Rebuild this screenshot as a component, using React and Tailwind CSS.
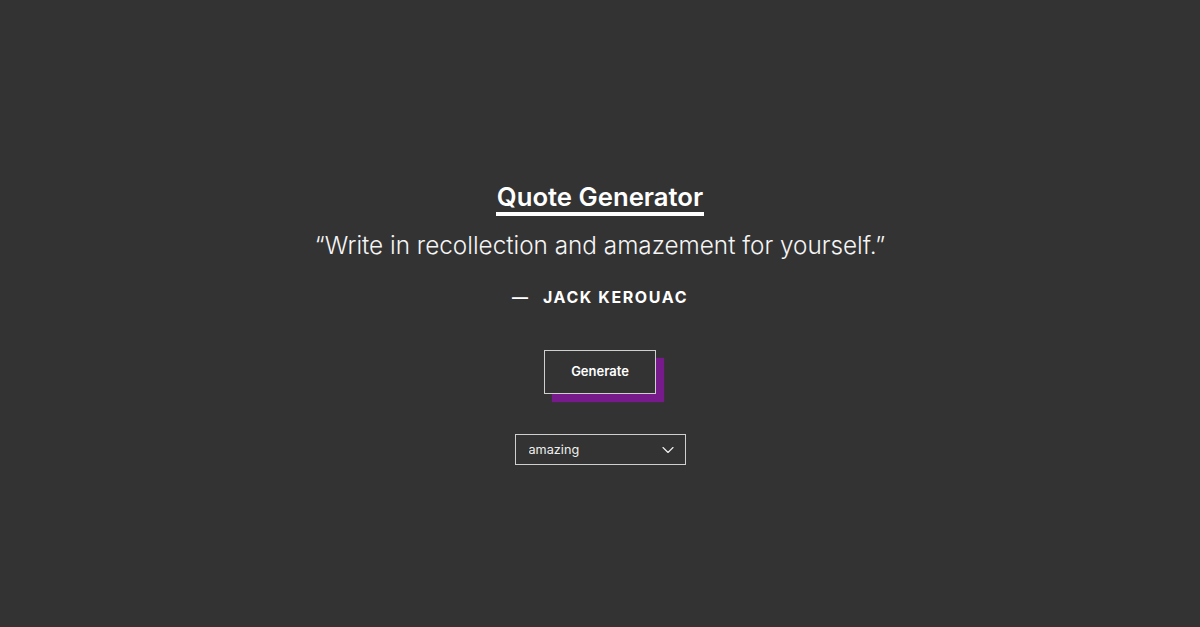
import { useState } from 'react';
import { ChevronDown } from 'lucide-react';

const topics = ['amazing', 'inspirational', 'life', 'love', 'wisdom'];

const App = () => {
    const [topic, setTopic] = useState('amazing');

    return (
        <div
            className="min-h-screen w-full bg-[#333333] text-white flex flex-col items-center pt-[182px]"
            style={{ fontFamily: 'Inter, "Noto Sans", sans-serif' }}
        >
            {/* Title */}
            <h1 className="text-[25.7px] leading-[30px] font-semibold border-b-4 border-white px-px">
                Quote Generator
            </h1>

            {/* Quote */}
            <p className="mt-[15px] text-[24.3px] leading-[29px] font-light text-[#f5f5f5]">
                “Write in recollection and amazement for yourself.”
            </p>

            {/* Author */}
            <p className="mt-[28px] text-[16px] leading-[19px] font-bold tracking-[0.1em] uppercase flex items-center">
                <span className="mr-[15px] tracking-normal">—</span>
                Jack Kerouac
            </p>

            {/* Generate button */}
            <button className="mt-[43px] w-[112px] h-[44px] border border-[#cfcfcf] bg-[#333333] text-[13px] font-semibold text-white shadow-[8px_8px_1px_#761a8c] cursor-pointer">
                Generate
            </button>

            {/* Topic select */}
            <div className="relative mt-[40px] w-[171px] h-[31px]">
                <select
                    value={topic}
                    onChange={(e) => setTopic(e.target.value)}
                    className="appearance-none w-full h-full border border-[#cfcfcf] bg-transparent text-[12.7px] text-[#eeeeee] pl-[13px] pr-8 pt-[1px] outline-none"
                >
                    {topics.map((t) => (
                        <option key={t} value={t} className="text-black">
                            {t}
                        </option>
                    ))}
                </select>
                <ChevronDown
                    className="absolute right-[8px] top-1/2 -translate-y-1/2 w-[20px] h-[20px] text-[#eeeeee] pointer-events-none"
                    strokeWidth={1.4}
                />
            </div>
        </div>
    );
};

export default App;
